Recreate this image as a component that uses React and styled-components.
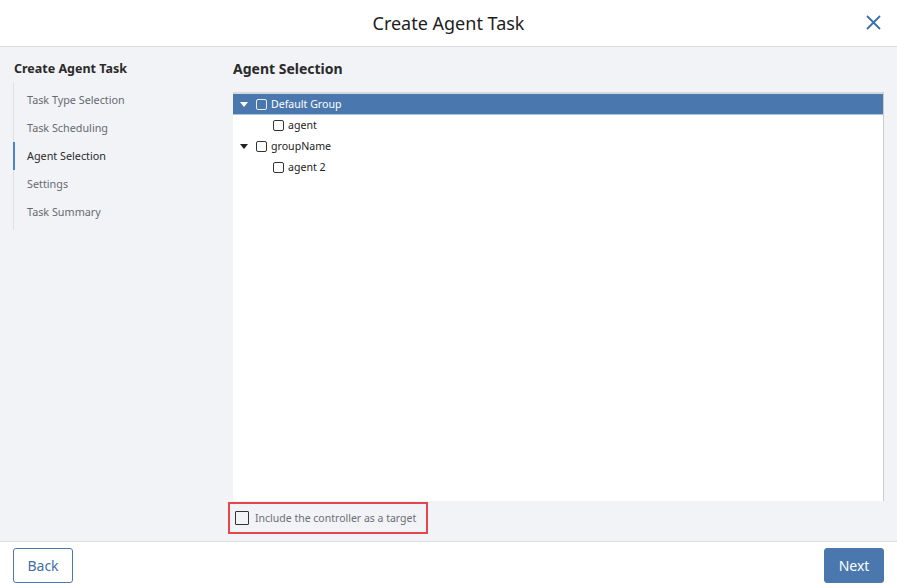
import React from "react";
import styled, { createGlobalStyle } from "styled-components";

const GlobalStyle = createGlobalStyle`
  html, body, #root {
    margin: 0;
    height: 100%;
  }
  body {
    font-family: "Noto Sans", "Open Sans", sans-serif;
    color: #222;
  }
  * {
    box-sizing: border-box;
  }
`;

const steps = [
  "Task Type Selection",
  "Task Scheduling",
  "Agent Selection",
  "Settings",
  "Task Summary",
];

const tree = [
  { name: "Default Group", selected: true, children: ["agent"] },
  { name: "groupName", selected: false, children: ["agent 2"] },
];

const Caret = ({ light }) => (
  <CaretBox>
    <svg width="8" height="5" viewBox="0 0 8 5">
      <path d="M0 0 L8 0 L4 5 Z" fill={light ? "#fff" : "#222"} />
    </svg>
  </CaretBox>
);

const App = () => {
  return (
    <Page>
      <GlobalStyle />
      <Header>
        <Title>Create Agent Task</Title>
        <CloseButton aria-label="close">
          <svg width="15" height="15" viewBox="0 0 15 15">
            <path
              d="M1 1 L14 14 M14 1 L1 14"
              stroke="#3f6fa6"
              strokeWidth="1.8"
              fill="none"
            />
          </svg>
        </CloseButton>
      </Header>

      <Body>
        <Sidebar>
          <SideTitle>Create Agent Task</SideTitle>
          <StepList>
            {steps.map((s) => (
              <Step key={s} active={s === "Agent Selection"}>
                {s}
              </Step>
            ))}
          </StepList>
        </Sidebar>

        <Main>
          <SectionTitle>Agent Selection</SectionTitle>
          <TreePanel>
            {tree.map((g) => (
              <React.Fragment key={g.name}>
                <Row selected={g.selected}>
                  <Caret light={g.selected} />
                  <Box light={g.selected} />
                  <Label>{g.name}</Label>
                </Row>
                {g.children.map((c) => (
                  <Row key={c} child>
                    <Box />
                    <Label>{c}</Label>
                  </Row>
                ))}
              </React.Fragment>
            ))}
          </TreePanel>
          <ControllerOption>
            <BigBox />
            <OptionText>Include the controller as a target</OptionText>
          </ControllerOption>
        </Main>
      </Body>

      <Footer>
        <BackButton>Back</BackButton>
        <NextButton>Next</NextButton>
      </Footer>
    </Page>
  );
};

export default App;

const Page = styled.div`
  width: 897px;
  height: 587px;
  display: flex;
  flex-direction: column;
  background: #f2f3f7;
  overflow: hidden;
`;

const Header = styled.div`
  height: 47px;
  flex-shrink: 0;
  background: #fff;
  border-bottom: 1px solid #dcdde2;
  display: flex;
  align-items: center;
  justify-content: center;
  position: relative;
`;

const Title = styled.div`
  font-size: 18px;
  color: #1d1d1d;
`;

const CloseButton = styled.div`
  position: absolute;
  right: 16px;
  top: 15px;
  width: 15px;
  height: 15px;
  display: flex;
`;

const Body = styled.div`
  flex: 1;
  display: flex;
  min-height: 0;
`;

const Sidebar = styled.div`
  width: 233px;
  flex-shrink: 0;
  padding: 13px 0 0 13px;
`;

const SideTitle = styled.div`
  font-size: 12.5px;
  font-weight: 700;
  color: #2a2a2a;
  height: 18px;
  line-height: 18px;
  padding-left: 1px;
`;

const StepList = styled.div`
  margin-top: 5px;
  border-left: 1px solid #dfe0e5;
  display: flex;
  flex-direction: column;
  padding: 3px 0 4px;
`;

const Step = styled.div`
  height: 28px;
  line-height: 28px;
  padding-left: 12px;
  margin-left: -1px;
  font-size: 10.8px;
  color: ${(p) => (p.active ? "#2a2a2a" : "#666a70")};
  border-left: 2px solid ${(p) => (p.active ? "#4a86c5" : "transparent")};
`;

const Main = styled.div`
  flex: 1;
  display: flex;
  flex-direction: column;
  padding: 13px 13px 7px 0;
  min-width: 0;
`;

const SectionTitle = styled.div`
  font-size: 14px;
  font-weight: 700;
  color: #2a2a2a;
  height: 18px;
  line-height: 18px;
`;

const TreePanel = styled.div`
  margin-top: 14px;
  flex: 1;
  background: #fff;
  border-top: 2px solid #d7d9de;
  border-right: 1px solid #c9cbd0;
  display: flex;
  flex-direction: column;
`;

const Row = styled.div`
  height: 21px;
  display: flex;
  align-items: center;
  padding-left: ${(p) => (p.child ? "40px" : "7px")};
  background: ${(p) => (p.selected ? "#4a78ae" : "transparent")};
  border-bottom: 1px solid ${(p) => (p.selected ? "#a9c4e4" : "transparent")};
  color: ${(p) => (p.selected ? "#fff" : "#222")};
`;

const CaretBox = styled.div`
  width: 16px;
  display: flex;
  align-items: center;
`;

const Box = styled.div`
  width: 11px;
  height: 11px;
  border: 1px solid ${(p) => (p.light ? "#e6eef8" : "#333")};
  border-radius: 2px;
  margin-right: 4px;
  flex-shrink: 0;
`;

const Label = styled.span`
  font-size: 10.6px;
  line-height: 14px;
`;

const ControllerOption = styled.div`
  margin-left: -5px;
  margin-top: 1px;
  width: 200px;
  height: 32px;
  border: 2px solid #e2474b;
  display: flex;
  align-items: center;
  padding-left: 5px;
`;

const BigBox = styled.div`
  width: 14px;
  height: 14px;
  border: 1px solid #333;
  border-radius: 1px;
  margin-right: 6px;
`;

const OptionText = styled.span`
  font-size: 10.5px;
  color: #6b6e74;
`;

const Footer = styled.div`
  height: 46px;
  flex-shrink: 0;
  background: #fff;
  border-top: 1px solid #dcdde2;
  display: flex;
  align-items: center;
  justify-content: space-between;
  padding: 2px 13px 0 13px;
`;

const Button = styled.button`
  width: 60px;
  height: 35px;
  border-radius: 3px;
  font-family: "Noto Sans", sans-serif;
  font-size: 14px;
  cursor: pointer;
`;

const BackButton = styled(Button)`
  background: #fff;
  border: 1px solid #4a78ae;
  color: #3f6fa6;
`;

const NextButton = styled(Button)`
  background: #4a78ae;
  border: 1px solid #4a78ae;
  color: #fff;
`;
